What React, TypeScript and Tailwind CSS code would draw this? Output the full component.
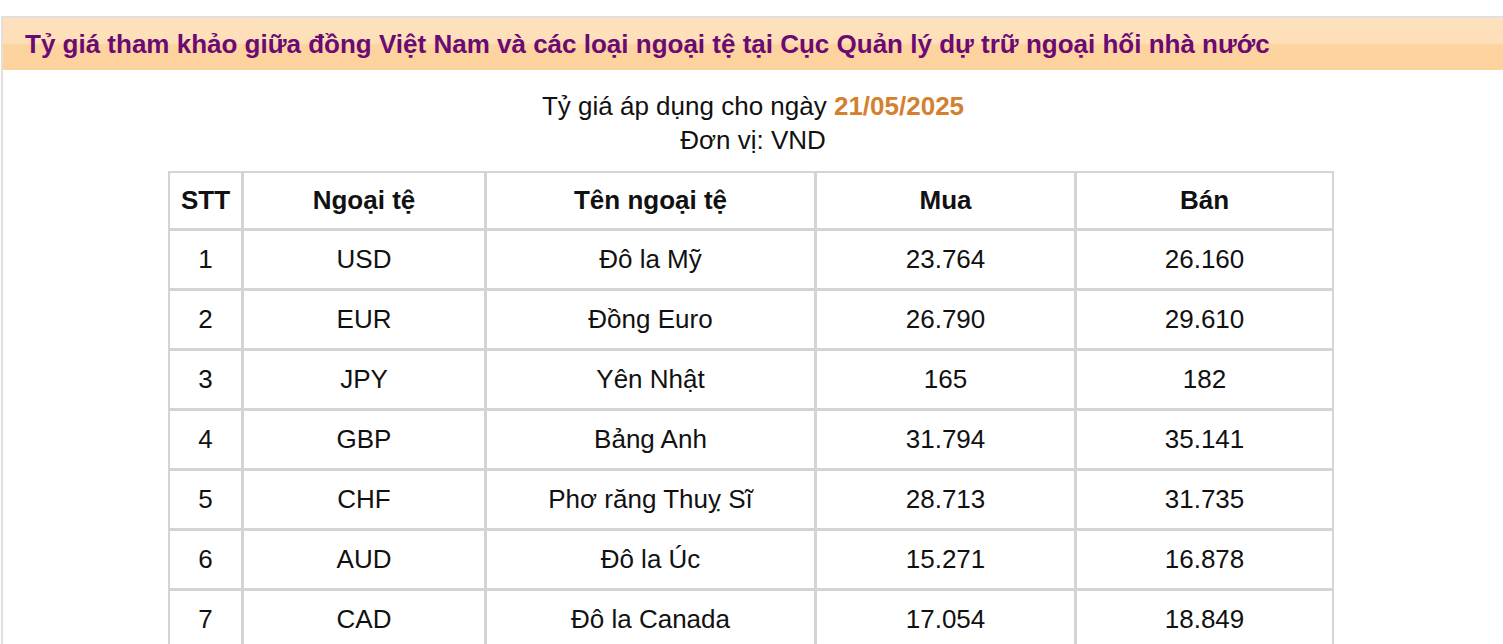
const rows = [
  { stt: 1, code: 'USD', name: 'Đô la Mỹ', buy: '23.764', sell: '26.160' },
  { stt: 2, code: 'EUR', name: 'Đồng Euro', buy: '26.790', sell: '29.610' },
  { stt: 3, code: 'JPY', name: 'Yên Nhật', buy: '165', sell: '182' },
  { stt: 4, code: 'GBP', name: 'Bảng Anh', buy: '31.794', sell: '35.141' },
  { stt: 5, code: 'CHF', name: 'Phơ răng Thuỵ Sĩ', buy: '28.713', sell: '31.735' },
  { stt: 6, code: 'AUD', name: 'Đô la Úc', buy: '15.271', sell: '16.878' },
  { stt: 7, code: 'CAD', name: 'Đô la Canada', buy: '17.054', sell: '18.849' },
];

const cell = 'border-r-[3px] border-b-[3px] border-[#d4d4d4] text-center align-middle last:border-r-0';

export default function App() {
  return (
    <div className="min-h-screen bg-white pt-4 pl-px" style={{ fontFamily: '"Liberation Sans", Arial, sans-serif' }}>
      <div className="border-t-2 border-l-2 border-[#e3dfdc] pb-10">
        <div className="h-[52px] flex items-center pl-[22px] bg-[linear-gradient(to_bottom,#fee1bd_0%,#fedfb9_48%,#fdd39f_52%,#fdd29d_100%)]">
          <h1 className="text-[26px] font-bold text-[#6a0a72] leading-none whitespace-nowrap">
            Tỷ giá tham khảo giữa đồng Việt Nam và các loại ngoại tệ tại Cục Quản lý dự trữ ngoại hối nhà nước
          </h1>
        </div>

        <div className="text-center text-[26px] leading-[34px] text-[#111] mt-[19px]">
          <p>
            Tỷ giá áp dụng cho ngày <span className="font-bold text-[#d4802f]">21/05/2025</span>
          </p>
          <p>Đơn vị: VND</p>
        </div>

        <div className="flex mt-[14px] ml-[165px]">
          <table className="w-[1166px] border-separate border-spacing-0 border-2 border-[#d4d4d4] text-[26px] text-[#111]">
            <colgroup>
              <col className="w-[74px]" />
              <col className="w-[243px]" />
              <col className="w-[330px]" />
              <col className="w-[260px]" />
              <col />
            </colgroup>
            <thead>
              <tr className="h-[58px]">
                <th className={`${cell} font-bold`}>STT</th>
                <th className={`${cell} font-bold`}>Ngoại tệ</th>
                <th className={`${cell} font-bold`}>Tên ngoại tệ</th>
                <th className={`${cell} font-bold`}>Mua</th>
                <th className={`${cell} font-bold`}>Bán</th>
              </tr>
            </thead>
            <tbody>
              {rows.map((r) => (
                <tr key={r.stt} className="h-[60px]">
                  <td className={cell}>{r.stt}</td>
                  <td className={cell}>{r.code}</td>
                  <td className={cell}>{r.name}</td>
                  <td className={cell}>{r.buy}</td>
                  <td className={cell}>{r.sell}</td>
                </tr>
              ))}
            </tbody>
          </table>
        </div>
      </div>
    </div>
  );
}
